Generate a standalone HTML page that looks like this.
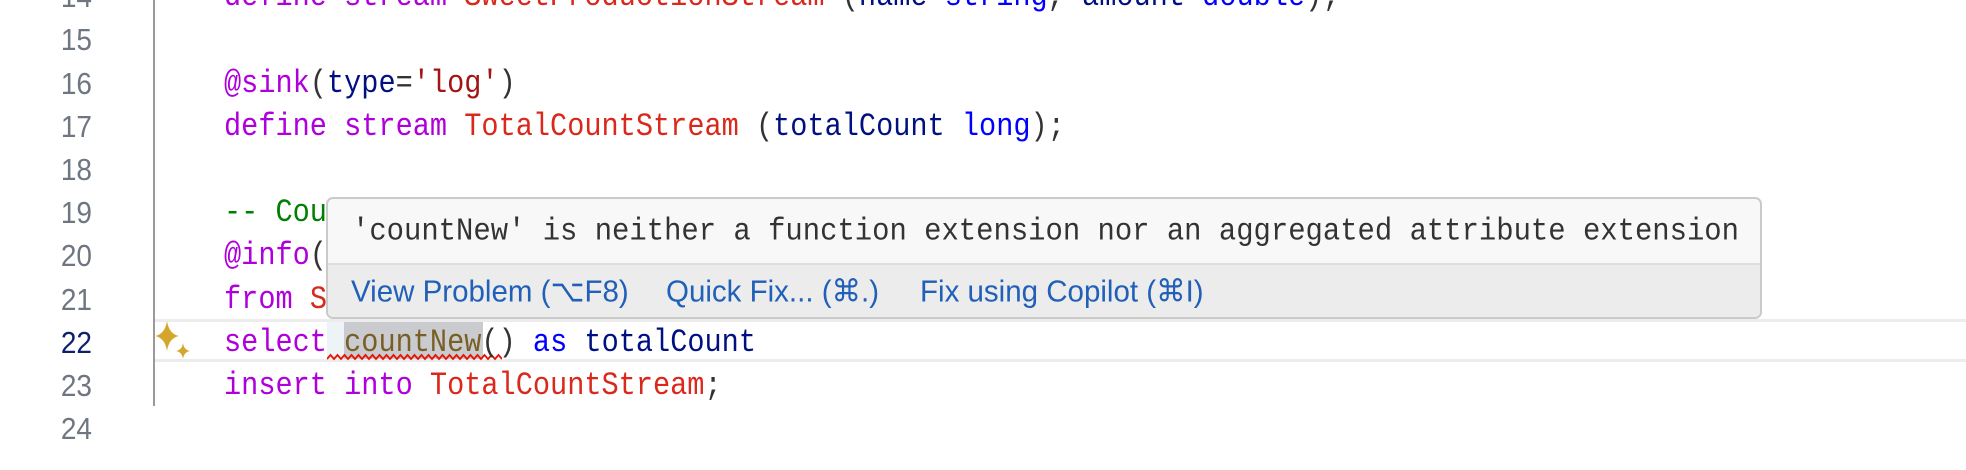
<!DOCTYPE html>
<html><head><meta charset="utf-8"><style>
body{margin:0;width:1966px;height:470px;background:#fff;overflow:hidden;position:relative;font-family:"Liberation Mono",monospace}
.ln{position:absolute;left:0;width:92px;text-align:right;font-family:"Liberation Sans",sans-serif;font-size:28px;color:#6e7681;height:43.2px;line-height:43.2px;transform:scaleY(1.1)}
.cl{position:absolute;left:224px;font-size:28.6px;height:43.2px;line-height:43.2px;white-space:pre;color:#333;transform:scaleY(1.12);transform-origin:0 50%}
.k{color:#af00db}.s{color:#d9281c}.t{color:#0000ff}.v{color:#001080}.str{color:#a31515}.c{color:#008000}.f{color:#795e26}
.lk{position:absolute;top:72px;font-family:'Liberation Sans',sans-serif;font-size:29.5px;line-height:42px;color:#2160b8;white-space:pre;transform:scaleY(1.05)}
</style></head><body>
<div style="position:absolute;left:153px;top:0;width:2px;height:406px;background:#9a9a9a"></div>
<div style="position:absolute;left:155px;top:319px;right:0;height:3px;background:#ececec"></div>
<div style="position:absolute;left:155px;top:359px;right:0;height:3px;background:#ececec"></div>
<div style="position:absolute;left:327px;top:322px;width:17px;height:37px;background:#eef3f8"></div>
<div style="position:absolute;left:344px;top:322px;width:139px;height:37px;background:#c9cbce"></div>
<svg style="position:absolute;left:327px;top:353px" width="175" height="8" viewBox="0 0 175 8"><path d="M0 6 l3.5 -4 l3.5 4 l3.5 -4 l3.5 4 l3.5 -4 l3.5 4 l3.5 -4 l3.5 4 l3.5 -4 l3.5 4 l3.5 -4 l3.5 4 l3.5 -4 l3.5 4 l3.5 -4 l3.5 4 l3.5 -4 l3.5 4 l3.5 -4 l3.5 4 l3.5 -4 l3.5 4 l3.5 -4 l3.5 4 l3.5 -4 l3.5 4 l3.5 -4 l3.5 4 l3.5 -4 l3.5 4 l3.5 -4 l3.5 4 l3.5 -4 l3.5 4 l3.5 -4 l3.5 4 l3.5 -4 l3.5 4 l3.5 -4 l3.5 4 l3.5 -4 l3.5 4 l3.5 -4 l3.5 4 l3.5 -4 l3.5 4 l3.5 -4 l3.5 4 l3.5 -4 l3.5 4" fill="none" stroke="#e51400" stroke-width="1.8"/></svg>
<svg style="position:absolute;left:154px;top:320px" width="40" height="40" viewBox="0 0 40 40"><path d="M13 1 Q15 14 25 16 Q15 18 13 31 Q11 18 1 16 Q11 14 13 1Z" fill="#d4a72c"/><path d="M29 23 Q30 30 36 31 Q30 32 29 39 Q28 32 22 31 Q28 30 29 23Z" fill="#d4a72c"/></svg>

<div class="ln" style="top:-24.8px">14</div>
<div class="ln" style="top:18.4px">15</div>
<div class="ln" style="top:61.6px">16</div>
<div class="ln" style="top:104.8px">17</div>
<div class="ln" style="top:148px">18</div>
<div class="ln" style="top:191.2px">19</div>
<div class="ln" style="top:234.4px">20</div>
<div class="ln" style="top:277.6px">21</div>
<div class="ln" style="top:320.8px;color:#0b216f">22</div>
<div class="ln" style="top:364px">23</div>
<div class="ln" style="top:407.2px">24</div>

<div class="cl" style="top:-24.8px"><span class="k">define stream</span> <span class="s">SweetProductionStream</span> (<span class="v">name</span> <span class="t">string</span>, <span class="v">amount</span> <span class="t">double</span>);</div>
<div class="cl" style="top:61.6px"><span class="k">@sink</span>(<span class="v">type</span>=<span class="str">'log'</span>)</div>
<div class="cl" style="top:104.8px"><span class="k">define stream</span> <span class="s">TotalCountStream</span> (<span class="v">totalCount</span> <span class="t">long</span>);</div>
<div class="cl" style="top:191.2px"><span class="c">-- Count the total</span></div>
<div class="cl" style="top:234.4px"><span class="k">@info</span>(name='query1')</div>
<div class="cl" style="top:277.6px"><span class="k">from</span> <span class="s">SweetProductionStream</span></div>
<div class="cl" style="top:320.8px"><span class="k">select</span> <span class="f">countNew</span>() <span class="t">as</span> <span class="v">totalCount</span></div>
<div class="cl" style="top:364px"><span class="k">insert into</span> <span class="s">TotalCountStream</span>;</div>

<div style="position:absolute;left:326px;top:197px;width:1432px;height:118px;border:2px solid #cacaca;border-radius:7px;background:#f8f8f8;overflow:hidden">
 <div style="position:absolute;left:24px;top:10px;font-size:28.9px;line-height:46px;color:#333;white-space:pre;transform:scaleY(1.1);transform-origin:0 50%">'countNew' is neither a function extension nor an aggregated attribute extension</div>
 <div style="position:absolute;left:0;right:0;top:64px;bottom:0;background:#ececec;border-top:2px solid #dedede"></div>
 <div class="lk" style="left:23px">View Problem (⌥F8)</div>
 <div class="lk" style="left:338px">Quick Fix... (⌘.)</div>
 <div class="lk" style="left:592px">Fix using Copilot (⌘I)</div>
</div>
</body></html>
